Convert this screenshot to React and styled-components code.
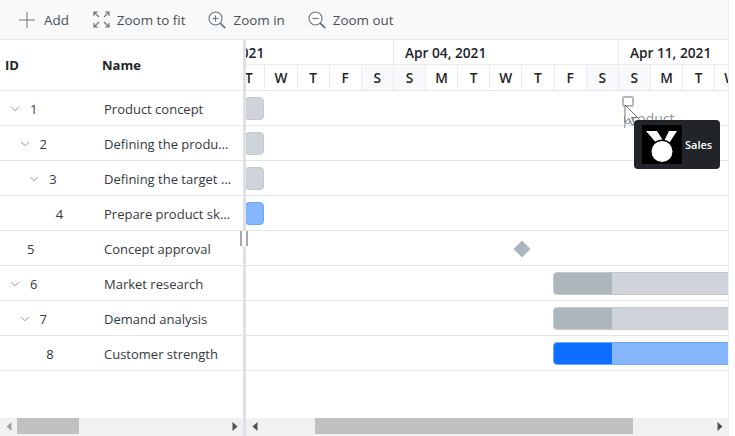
import styled, { createGlobalStyle } from "styled-components";
import { ChevronDown } from "lucide-react";

const DAY = 32.14;
const DAY_LETTERS = ["S", "M", "T", "W", "T", "F", "S"];
const WEEKS = ["Mar 28, 2021", "Apr 04, 2021", "Apr 11, 2021"];
const SCROLL_OFFSET = 77;

const TASKS = [
  { id: 1, name: "Product concept", level: 0, parent: true, bar: { left: -1, width: 19, tone: "grey" } },
  { id: 2, name: "Defining the product usage", level: 1, parent: true, bar: { left: -1, width: 19, tone: "grey" } },
  { id: 3, name: "Defining the target audience", level: 2, parent: true, bar: { left: -1, width: 19, tone: "grey" } },
  { id: 4, name: "Prepare product sketch and notes", level: 3, bar: { left: -1, width: 19, tone: "blue" } },
  { id: 5, name: "Concept approval", level: 0, milestone: 276 },
  { id: 6, name: "Market research", level: 0, parent: true, bar: { left: 307, width: 300, tone: "grey", progress: 58 } },
  { id: 7, name: "Demand analysis", level: 1, parent: true, bar: { left: 307, width: 300, tone: "grey", progress: 58 } },
  { id: 8, name: "Customer strength", level: 2, bar: { left: 307, width: 300, tone: "blue", progress: 58 } },
];

const TONES = {
  grey: { bg: "#ced4da", border: "#c4cad0", done: "#adb5bd" },
  blue: { bg: "#86b7fe", border: "#6ea8fe", done: "#0d6efd" },
};

const GlobalStyle = createGlobalStyle`
  html, body {
    margin: 0;
    padding: 0;
    background: #fff;
  }
  body {
    font-family: "Open Sans", "Noto Sans", sans-serif;
    color: #212529;
  }
`;

const Shell = styled.div`
  position: relative;
  width: 729px;
  height: 436px;
  box-sizing: border-box;
  display: flex;
  flex-direction: column;
  border-right: 1px solid #eef0f2;
`;

const Toolbar = styled.div`
  height: 40px;
  flex: none;
  box-sizing: border-box;
  display: flex;
  align-items: center;
  padding-left: 18px;
  background: #f8f9fa;
  border-bottom: 1px solid #e3e6e9;
`;

const ToolButton = styled.div`
  display: flex;
  align-items: center;
  gap: ${(p) => p.$gap}px;
  margin-right: ${(p) => p.$after}px;
  font-size: 13.4px;
  color: #495057;
  svg {
    flex: none;
    color: #6c757d;
  }
`;

const Panes = styled.div`
  flex: 1;
  display: flex;
  min-height: 0;
`;

const TreePane = styled.div`
  width: 243px;
  flex: none;
  display: flex;
  flex-direction: column;
  overflow: hidden;
`;

const Splitter = styled.div`
  position: relative;
  width: 3px;
  flex: none;
  background: #dee2e6;
`;

const Grip = styled.span`
  position: absolute;
  left: -3px;
  top: 191px;
  width: 8px;
  height: 15px;
  box-sizing: border-box;
  background: #fff;
  border-left: 2px solid #a6abb0;
  border-right: 2px solid #a6abb0;
`;

const TreeHeader = styled.div`
  height: 51px;
  flex: none;
  box-sizing: border-box;
  display: flex;
  align-items: center;
  border-bottom: 1px solid #e3e6e9;
  font-size: 13px;
  font-weight: 700;
  color: #212529;
`;

const IdHead = styled.div`
  width: 102px;
  padding-left: 5px;
  box-sizing: border-box;
`;

const RowList = styled.div`
  flex: 1;
  min-height: 0;
`;

const TreeRow = styled.div`
  height: 35px;
  box-sizing: border-box;
  display: flex;
  align-items: center;
  padding-top: 2px;
  border-bottom: 1px solid #e3e6e9;
  font-size: 13px;
  color: #343a40;
`;

const IdCell = styled.div`
  width: 104px;
  flex: none;
  display: flex;
  align-items: center;
  box-sizing: border-box;
  padding-left: ${(p) => (p.$parent ? 9 : 27) + p.$level * 9.6}px;
`;

const Expander = styled.span`
  width: 21px;
  flex: none;
  display: flex;
  margin-left: -1px;
  margin-right: 1px;
  color: #5f676e;
`;

const NameCell = styled.div`
  width: 128px;
  white-space: nowrap;
  overflow: hidden;
  text-overflow: ellipsis;
`;

const TimelinePane = styled.div`
  flex: 1;
  min-width: 0;
  display: flex;
  flex-direction: column;
  overflow: hidden;
`;

const TimelineClip = styled.div`
  flex: 1;
  min-height: 0;
  overflow: hidden;
`;

const TimelineTrack = styled.div`
  width: 1000px;
  margin-left: -${SCROLL_OFFSET}px;
`;

const WeekRow = styled.div`
  height: 25px;
  box-sizing: border-box;
  display: flex;
  border-bottom: 1px solid #e9ecef;
`;

const WeekCell = styled.div`
  width: ${DAY * 7}px;
  flex: none;
  box-sizing: border-box;
  padding-left: 11px;
  line-height: 25px;
  font-size: 13.7px;
  font-weight: 600;
  white-space: nowrap;
  border-right: 1px solid #e9ecef;
`;

const DayRow = styled.div`
  height: 26px;
  box-sizing: border-box;
  display: flex;
  border-bottom: 1px solid #e3e6e9;
`;

const DayCell = styled.div`
  width: ${DAY}px;
  flex: none;
  box-sizing: border-box;
  text-align: center;
  line-height: 26px;
  font-size: 13.7px;
  font-weight: 600;
  border-right: 1px solid #e9ecef;
  background: ${(p) => (p.$weekend ? "#f8f9fa" : "#fff")};
`;

const ChartRow = styled.div`
  position: relative;
  height: 35px;
  box-sizing: border-box;
  border-bottom: 1px solid #e3e6e9;
`;

const Bar = styled.div`
  position: absolute;
  top: 6px;
  height: 23px;
  box-sizing: border-box;
  border-radius: 4px;
  overflow: hidden;
  background: ${(p) => TONES[p.$tone].bg};
  border: 1px solid ${(p) => TONES[p.$tone].border};
`;

const BarProgress = styled.div`
  height: 100%;
  background: ${(p) => TONES[p.$tone].done};
`;

const Milestone = styled.div`
  position: absolute;
  top: 12px;
  width: 12px;
  height: 12px;
  border-radius: 1px;
  background: #adb5bd;
  transform: rotate(45deg);
`;

const ScrollBar = styled.div`
  height: 18px;
  flex: none;
  display: flex;
  background: #f1f1f1;
`;

const ArrowButton = styled.span`
  width: 17px;
  height: 16px;
  flex: none;
  display: flex;
  align-items: center;
  justify-content: center;
  svg {
    display: block;
    fill: ${(p) => (p.$dim ? "#a3a3a3" : "#505050")};
  }
`;

const ScrollTrack = styled.div`
  flex: 1;
  min-width: 0;
  height: 16px;
`;

const ScrollThumb = styled.div`
  height: 100%;
  margin-left: ${(p) => p.$start}px;
  width: ${(p) => p.$size}px;
  background: #c1c1c1;
`;

const DragGhost = styled.div`
  position: absolute;
  left: 622px;
  top: 96px;
  width: 50px;
  height: 30px;
`;

const GhostBox = styled.div`
  width: 12px;
  height: 11px;
  box-sizing: border-box;
  border: 2px solid #b4b8bc;
  border-radius: 2px;
`;

const GhostLabel = styled.div`
  position: absolute;
  left: 1px;
  top: 13px;
  font-size: 14px;
  line-height: 19px;
  color: #909498;
  white-space: nowrap;
`;

const GhostCursor = styled.svg`
  position: absolute;
  left: 2px;
  top: 8px;
`;

const DragTip = styled.div`
  position: absolute;
  left: 634px;
  top: 120px;
  width: 86px;
  height: 49px;
  box-sizing: border-box;
  display: flex;
  align-items: center;
  gap: 3px;
  padding-left: 8px;
  border-radius: 4px;
  background: #212529;
  color: #fff;
  font-size: 11px;
  font-weight: 600;
`;

const Arrow = ({ dir, dim }) => (
  <ArrowButton $dim={dim}>
    <svg width="6" height="9" viewBox="0 0 6 9">
      <path d={dir === "left" ? "M5.5 0v9L0.5 4.5z" : "M0.5 0v9l5-4.5z"} />
    </svg>
  </ArrowButton>
);

const AddIcon = () => (
  <svg width="18" height="18" viewBox="0 0 18 18" fill="none" stroke="currentColor" strokeWidth="1">
    <path d="M9 1v16M1 9h16" />
  </svg>
);

const FitIcon = () => (
  <svg width="17" height="17" viewBox="0 0 17 17" fill="none" stroke="currentColor" strokeWidth="1.2">
    <path d="M1 5V1h4M1 1l5 5M12 1h4v4M16 1l-5 5M1 12v4h4M1 16l5-5M12 16h4v-4M16 16l-5-5" />
  </svg>
);

const LensIcon = ({ plus }) => (
  <svg width="18" height="18" viewBox="0 0 18 18" fill="none" stroke="currentColor" strokeWidth="1.1">
    <circle cx="7.5" cy="7.5" r="6.5" />
    <path d="M12.2 12.2l5 5" strokeWidth="1.8" />
    <path d={plus ? "M7.5 4.5v6M4.5 7.5h6" : "M4.5 7.5h6"} />
  </svg>
);

const MedalIcon = () => (
  <svg width="40" height="39" viewBox="0 0 40 39">
    <rect width="40" height="39" fill="#000" />
    <path d="M4 6h11l7 11-6 3zM27 6h8l-9 14-4-4z" fill="#fff" />
    <circle cx="20" cy="26.5" r="12" fill="#000" />
    <circle cx="20" cy="26.5" r="10.5" fill="#fff" />
  </svg>
);

const App = () => {
  const days = WEEKS.flatMap(() => DAY_LETTERS);

  return (
    <Shell>
      <GlobalStyle />
      <Toolbar>
        <ToolButton $after={24} $gap={8}>
          <AddIcon />
          Add
        </ToolButton>
        <ToolButton $after={23} $gap={7}>
          <FitIcon />
          Zoom to fit
        </ToolButton>
        <ToolButton $after={23} $gap={7}>
          <LensIcon plus />
          Zoom in
        </ToolButton>
        <ToolButton $after={0} $gap={7}>
          <LensIcon />
          Zoom out
        </ToolButton>
      </Toolbar>
      <Panes>
        <TreePane>
          <TreeHeader>
            <IdHead>ID</IdHead>
            <div>Name</div>
          </TreeHeader>
          <RowList>
            {TASKS.map((task) => (
              <TreeRow key={task.id}>
                <IdCell $level={task.level} $parent={task.parent}>
                  {task.parent && (
                    <Expander>
                      <ChevronDown size={14} strokeWidth={1.2} />
                    </Expander>
                  )}
                  {task.id}
                </IdCell>
                <NameCell>{task.name}</NameCell>
              </TreeRow>
            ))}
          </RowList>
          <ScrollBar>
            <Arrow dir="left" dim />
            <ScrollTrack>
              <ScrollThumb $start={0} $size={62} />
            </ScrollTrack>
            <Arrow dir="right" />
          </ScrollBar>
        </TreePane>
        <Splitter>
          <Grip />
        </Splitter>
        <TimelinePane>
          <TimelineClip>
            <TimelineTrack>
              <WeekRow>
                {WEEKS.map((week) => (
                  <WeekCell key={week}>{week}</WeekCell>
                ))}
              </WeekRow>
              <DayRow>
                {days.map((letter, i) => (
                  <DayCell key={i} $weekend={i % 7 === 0 || i % 7 === 6}>
                    {letter}
                  </DayCell>
                ))}
              </DayRow>
              {TASKS.map((task) => (
                <ChartRow key={task.id}>
                  {task.bar && (
                    <Bar
                      $tone={task.bar.tone}
                      style={{ left: task.bar.left + SCROLL_OFFSET, width: task.bar.width }}
                    >
                      {task.bar.progress && (
                        <BarProgress $tone={task.bar.tone} style={{ width: task.bar.progress }} />
                      )}
                    </Bar>
                  )}
                  {task.milestone && <Milestone style={{ left: task.milestone - 6 + SCROLL_OFFSET }} />}
                </ChartRow>
              ))}
            </TimelineTrack>
          </TimelineClip>
          <ScrollBar>
            <Arrow dir="left" />
            <ScrollTrack>
              <ScrollThumb $start={52} $size={318} />
            </ScrollTrack>
            <Arrow dir="right" />
          </ScrollBar>
        </TimelinePane>
      </Panes>
      <DragGhost>
        <GhostBox />
        <GhostLabel>product</GhostLabel>
        <GhostCursor width="15" height="22" viewBox="0 0 15 22">
          <path d="M1 1v17l4-3.5 3 6.5 2.5-1-3-6.5h6z" fill="#fff" stroke="#6f7377" strokeWidth="1" />
        </GhostCursor>
      </DragGhost>
      <DragTip>
        <MedalIcon />
        Sales
      </DragTip>
    </Shell>
  );
};

export default App;
